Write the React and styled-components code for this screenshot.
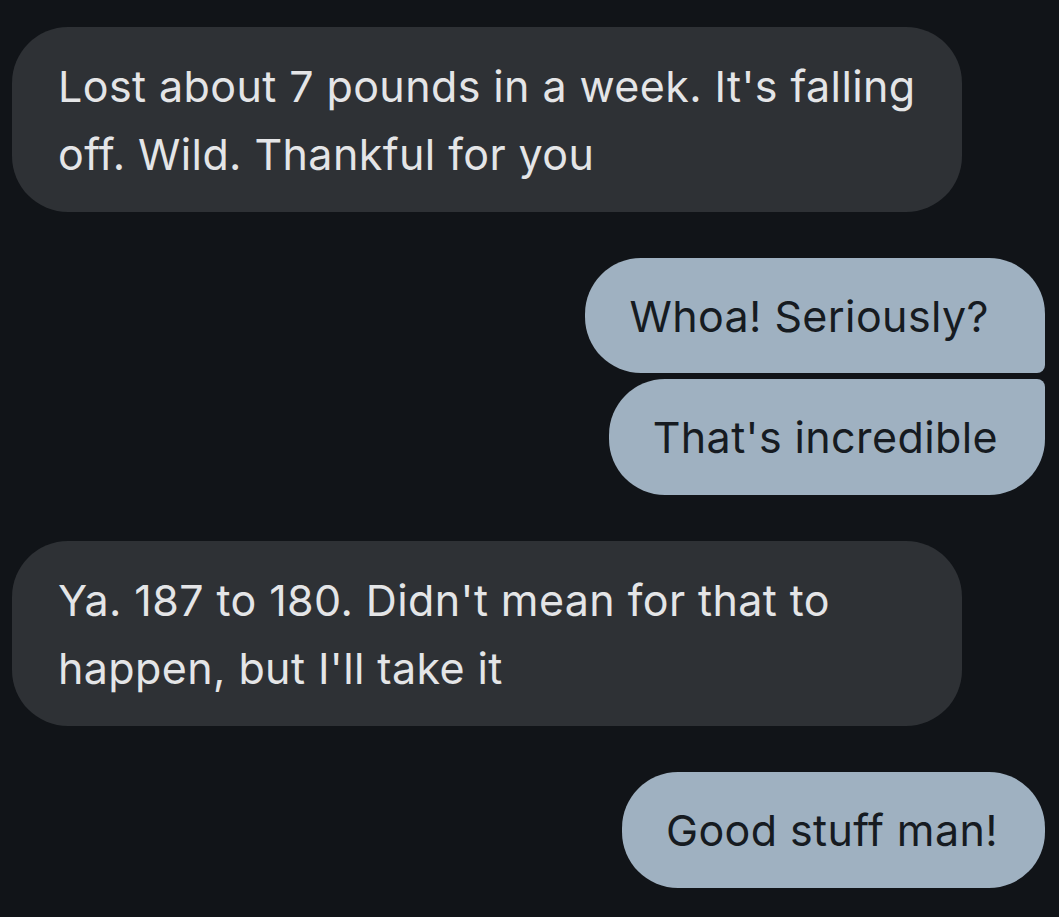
import React from 'react'
import styled, { createGlobalStyle, css } from 'styled-components'

const GlobalStyle = createGlobalStyle`
  html, body {
    margin: 0;
    padding: 0;
    background: #111418;
  }
  body {
    font-family: Inter, Roboto, "Noto Sans", sans-serif;
  }
`

const messages = [
  { id: 1, from: 'them', text: "Lost about 7 pounds in a week. It's falling off. Wild. Thankful for you" },
  { id: 2, from: 'me', text: 'Whoa! Seriously?', shape: 'first' },
  { id: 3, from: 'me', text: "That's incredible", shape: 'last' },
  { id: 4, from: 'them', text: "Ya. 187 to 180. Didn't mean for that to happen, but I'll take it" },
  { id: 5, from: 'me', text: 'Good stuff man!' }
]

export default function App () {
  return (
    <>
      <GlobalStyle />
      <StyledThread>
        {messages.map((message, index) => {
          const prev = messages[index - 1]
          const grouped = prev && prev.from === message.from
          return (
            <StyledRow key={message.id} $mine={message.from === 'me'} $grouped={grouped} $first={index === 0}>
              <StyledBubble $mine={message.from === 'me'} $shape={message.shape}>
                {message.text}
              </StyledBubble>
            </StyledRow>
          )
        })}
      </StyledThread>
    </>
  )
}

const StyledThread = styled.div`
  display: flex;
  flex-direction: column;
  padding: 27px 14px 0 12px;
  min-height: 917px;
  box-sizing: border-box;
`

const StyledRow = styled.div`
  display: flex;
  justify-content: ${({ $mine }) => ($mine ? 'flex-end' : 'flex-start')};
  margin-top: ${({ $grouped, $first }) => ($first ? 0 : $grouped ? 6 : 46)}px;
`

const bigRadius = 56
const smallRadius = 8

const StyledBubble = styled.div`
  box-sizing: border-box;
  font-size: 43px;
  line-height: 68px;
  letter-spacing: 0.4px;
  border-radius: ${bigRadius}px;

  ${({ $mine }) => $mine
    ? css`
      background: #9fb1c1;
      color: #161b21;
      padding: 24px 47px 24px 44px;
      white-space: nowrap;
    `
    : css`
      width: 950px;
      background: #2e3135;
      color: #e4e5e7;
      padding: 25px 46px 24px;
    `}

  ${({ $shape }) => $shape === 'first' && css`
    border-bottom-right-radius: ${smallRadius}px;
    padding-right: 56px;
    padding-bottom: 23px;
  `}

  ${({ $shape }) => $shape === 'last' && css`
    border-top-right-radius: ${smallRadius}px;
  `}
`
